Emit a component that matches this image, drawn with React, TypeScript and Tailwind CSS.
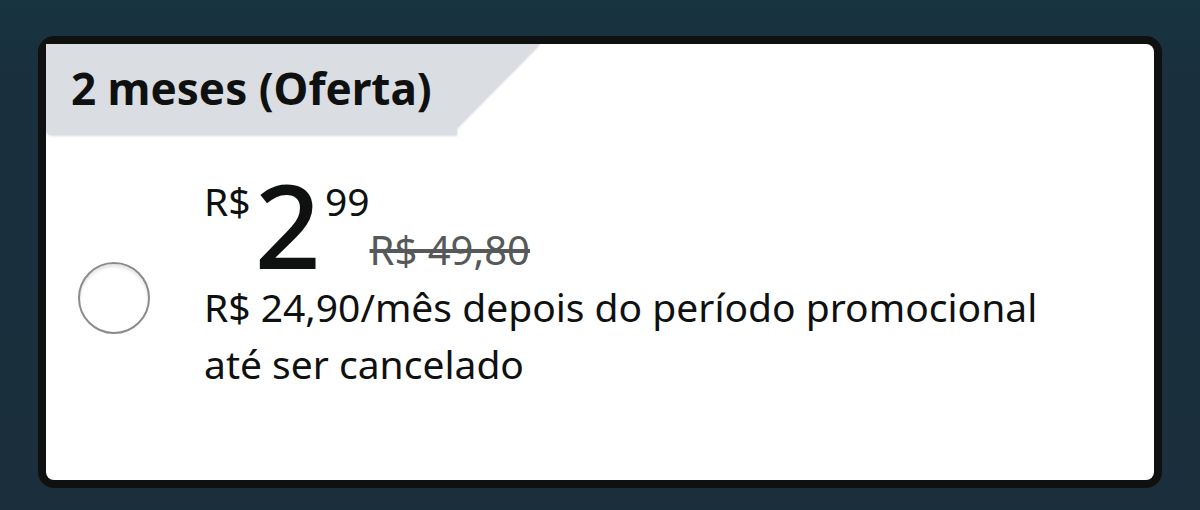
export default function App() {
  return (
    <main className="min-h-screen bg-gradient-to-b from-[#17343f] via-[#1a2f3e] via-15% to-[#1a2f3b] px-[38px] pt-9 pb-[22px] font-['Noto_Sans',sans-serif] text-[#0f1111]">
      <section className="rounded-2xl border-8 border-[#0f1111] bg-[#0f1111]">
        <div className="overflow-hidden rounded-lg rounded-tl-none bg-white pb-[57px]">
          <header className="relative flex h-[92px] w-[494px] max-w-full items-center pb-1 pl-[25px]">
            <svg
              className="absolute inset-0 h-full w-full overflow-visible"
              viewBox="0 0 494 92"
              preserveAspectRatio="none"
              aria-hidden="true"
            >
              <path
                d="M0 0H494L411 84V91H8Q0 91 0 86Z"
                fill="#dadde1"
                className="drop-shadow-[0_1px_1px_rgba(0,0,0,0.15)]"
              />
            </svg>
            <h1 className="relative text-[44px] leading-[57px] font-bold whitespace-nowrap">
              2 meses (Oferta)
            </h1>
          </header>

          <label
            htmlFor="offer"
            className="flex cursor-pointer items-center gap-[54px] pt-9 pr-20 pl-8"
          >
            <input
              id="offer"
              type="radio"
              name="plan"
              className="size-[72px] shrink-0 appearance-none rounded-full border-2 border-[#888c8c] bg-white shadow-[inset_0_3px_3px_rgba(0,0,0,0.1)] checked:border-[20px] checked:border-[#e77600]"
            />
            <span className="block pb-[31px] text-[39px] leading-[57px]">
              <span className="flex h-[106px] items-start">
                <span>R$</span>
                <span className="px-1 text-[116px] leading-[104px] font-medium">2</span>
                <span>99</span>
                <s className="self-end text-[40px] text-[#565959]">R$ 49,80</s>
              </span>
              <span className="block">
                R$ 24,90/mês depois do período promocional até ser cancelado
              </span>
            </span>
          </label>
        </div>
      </section>
    </main>
  );
}
